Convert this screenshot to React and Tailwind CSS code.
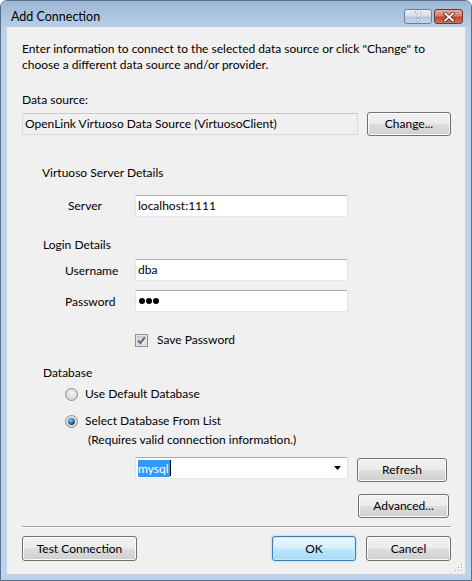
import React from 'react';

const btn =
  'rounded-[3px] border border-[#707070] bg-[linear-gradient(to_bottom,#f2f2f2_0%,#ebebeb_48%,#dddddd_52%,#cfcfcf_100%)] shadow-[inset_0_0_0_1px_#fbfbfb] text-[12px] text-black flex items-center justify-center';

const field =
  'h-[22px] w-[213px] bg-white border border-[#abadb3] border-l-[#e2e3ea] border-r-[#dbdfe6] border-b-[#e3e9ef] rounded-[2px] flex items-center pl-[2px]';

function Radio({ checked }) {
  return (
    <svg width="13" height="13" viewBox="0 0 13 13">
      <defs>
        <radialGradient id="rg" cx="50%" cy="40%" r="60%">
          <stop offset="0%" stopColor="#f8f8f8" />
          <stop offset="100%" stopColor="#cfcfcf" />
        </radialGradient>
        <radialGradient id="dot" cx="40%" cy="35%" r="65%">
          <stop offset="0%" stopColor="#8fd3f5" />
          <stop offset="55%" stopColor="#2a7fbf" />
          <stop offset="100%" stopColor="#0e3c6b" />
        </radialGradient>
      </defs>
      <circle cx="6.5" cy="6.5" r="6" fill="url(#rg)" stroke="#8e8f8f" />
      {checked && <circle cx="6.5" cy="6.5" r="3.4" fill="url(#dot)" />}
    </svg>
  );
}

function Checkbox() {
  return (
    <svg width="13" height="13" viewBox="0 0 13 13">
      <defs>
        <linearGradient id="cb" x1="0" y1="0" x2="1" y2="1">
          <stop offset="0%" stopColor="#c9c9c9" />
          <stop offset="100%" stopColor="#f2f2f2" />
        </linearGradient>
      </defs>
      <rect x="0.5" y="0.5" width="12" height="12" fill="#f4f4f4" stroke="#8f8f8f" />
      <rect x="2" y="2" width="9" height="9" fill="url(#cb)" stroke="#b5b5b5" strokeWidth="0.5" />
      <path d="M3.2 6.6 L5.4 9 L9.8 3.4" fill="none" stroke="#4c5d8f" strokeWidth="1.8" />
    </svg>
  );
}

export default function App() {
  return (
    <div className="w-[472px] h-[581px] relative rounded-t-[7px] border border-[#566f8c] bg-[#bcd3ea] flex flex-col font-[Lato,sans-serif] text-[12px] leading-[16px] text-black overflow-hidden">
      {/* Title bar */}
      <div className="h-[26px] shrink-0 flex items-start justify-between pt-[7px] pl-[10px] pr-[8px] bg-[linear-gradient(to_bottom,#9cb6d3,#b9cfe8)]">
        <span className="pt-[1px] text-[12.5px]">Add Connection</span>
        <div className="flex gap-[2px] pt-[1px]">
          <div className="w-[28px] h-[15px] rounded-[3px] border border-[#6f8199] bg-[linear-gradient(to_bottom,#e7eef6_0%,#d3dfec_48%,#b5c8de_52%,#c8d7e8_100%)] flex items-center justify-center">
            <span className="text-white font-black text-[13px] leading-[13px] [-webkit-text-stroke:0.6px_#33465e] [paint-order:stroke_fill]">?</span>
          </div>
          <div className="w-[29px] h-[15px] rounded-[3px] border border-[#6a3b35] bg-[linear-gradient(to_bottom,#e9aa9c_0%,#d97a65_48%,#c2442c_52%,#d3705a_100%)] flex items-center justify-center">
            <svg width="12" height="10" viewBox="0 0 12 10">
              <path d="M2 1.5 L10 8.5 M10 1.5 L2 8.5" stroke="#4a2320" strokeWidth="3.4" strokeLinecap="square" />
              <path d="M2 1.5 L10 8.5 M10 1.5 L2 8.5" stroke="#ffffff" strokeWidth="1.8" strokeLinecap="square" />
            </svg>
          </div>
        </div>
      </div>

      {/* Client area */}
      <div className="relative flex-1 mx-[6px] mb-[6px] bg-[#f0f0f0] flex flex-col">
        <p className="mt-[14px] pl-[15px] whitespace-nowrap">
          Enter information to connect to the selected data source or click "Change" to
          <br />
          choose a different data source and/or provider.
        </p>

        <div className="mt-[19px] pl-[15px]">Data source:</div>

        <div className="mt-[4px] h-[24px] pl-[15px] flex items-center gap-[9px]">
          <div className="h-[22px] w-[336px] bg-[#f0f0f0] border border-[#dadada] border-t-[#c9c9c9] flex items-center pl-[2px] whitespace-nowrap">
            OpenLink Virtuoso Data Source (VirtuosoClient)
          </div>
          <button className={`${btn} h-[24px] w-[84px]`}>Change...</button>
        </div>

        <div className="mt-[29px] pl-[35px]">Virtuoso Server Details</div>

        <div className="mt-[14px] h-[22px] flex items-center">
          <span className="w-[128px] pl-[61px]">Server</span>
          <div className={field}>localhost:1111</div>
        </div>

        <div className="mt-[20px] pl-[36px]">Login Details</div>

        <div className="mt-[6px] h-[22px] flex items-center">
          <span className="w-[128px] pl-[58px] pt-[2px]">Username</span>
          <div className={field}>dba</div>
        </div>

        <div className="mt-[9px] h-[22px] flex items-center">
          <span className="w-[128px] pl-[58px] pt-[2px]">Password</span>
          <div className={`${field} gap-[1px] pl-[3px]`}>
            <span className="w-[6px] h-[6px] rounded-full bg-black" />
            <span className="w-[6px] h-[6px] rounded-full bg-black" />
            <span className="w-[6px] h-[6px] rounded-full bg-black" />
          </div>
        </div>

        <div className="mt-[20px] h-[16px] pl-[128px] flex items-center gap-[9px]">
          <Checkbox />
          <span>Save Password</span>
        </div>

        <div className="mt-[17px] pl-[36px]">Database</div>

        <div className="mt-[5px] h-[16px] pl-[58px] flex items-center gap-[7px]">
          <Radio checked={false} />
          <span>Use Default Database</span>
        </div>

        <div className="mt-[11px] h-[16px] pl-[58px] flex items-center gap-[7px]">
          <Radio checked />
          <span>Select Database From List</span>
        </div>

        <div className="mt-[3px] pl-[81px]">(Requires valid connection information.)</div>

        <div className="mt-[9px] h-[25px] pl-[128px] flex items-start gap-[9px]">
          <div className={`${field} justify-between pl-[1px] pr-[6px]`}>
            <div className="flex items-center h-[18px]">
              <span className="bg-[#3399ff] text-white h-[17px] leading-[17px] pr-[1px]">mysql</span>
              <span className="w-[1px] h-[16px] bg-black" />
            </div>
            <svg width="7" height="4" viewBox="0 0 7 4">
              <path d="M0 0 H7 L3.5 4 Z" fill="#000" />
            </svg>
          </div>
          <button className={`${btn} mt-[1px] h-[24px] w-[90px]`}>Refresh</button>
        </div>

        <div className="mt-[12px] pl-[351px]">
          <button className={`${btn} h-[24px] w-[91px]`}>Advanced...</button>
        </div>

        <div className="mt-[8px] ml-[15px] w-[429px] h-[2px] border-t border-t-[#a0a0a0] border-b border-b-white" />

        <div className="mt-[8px] pl-[15px] flex items-center">
          <button className={`${btn} h-[25px] w-[115px]`}>Test Connection</button>
          <button className="ml-[135px] h-[25px] w-[84px] rounded-[3px] border border-[#3c7fb1] bg-[linear-gradient(to_bottom,#eaf6fd_0%,#d9f0fc_48%,#bee6fd_52%,#a7d9f5_100%)] shadow-[inset_0_0_0_1px_#c5ecfc,0_0_2px_#6bc3f1] text-[12px] flex items-center justify-center">
            OK
          </button>
          <button className={`${btn} ml-[10px] h-[25px] w-[85px]`}>Cancel</button>
        </div>

        {/* size grip */}
        <svg className="absolute right-[1px] bottom-[1px]" width="9" height="9" viewBox="0 0 9 9">
          {[[6, 0], [3, 3], [6, 3], [0, 6], [3, 6], [6, 6]].map(([x, y]) => (
            <g key={`${x}-${y}`}>
              <rect x={x + 1} y={y + 1} width="1" height="1" fill="#ffffff" />
              <rect x={x} y={y} width="1" height="1" fill="#9a9a9a" />
            </g>
          ))}
        </svg>
      </div>
    </div>
  );
}
